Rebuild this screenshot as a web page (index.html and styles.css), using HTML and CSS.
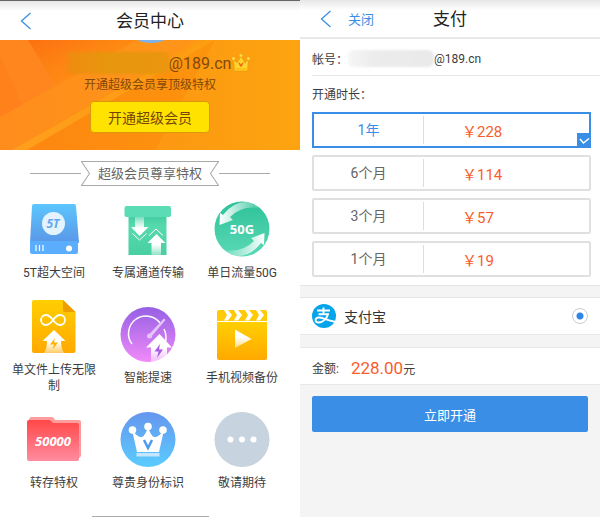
FILE: index.html
```html
<!DOCTYPE html>
<html lang="zh-CN">

<head>
  <meta charset="UTF-8" />
  <meta name="viewport" content="width=device-width,initial-scale=1.0" />
  <title>会员中心</title>
  <link rel="stylesheet" href="styles.css">
</head>

<body>
  <div class="screens">

    <!-- 会员中心 -->
    <section class="screen member">
      <header class="bar bar-member">
        <a href="#" class="back" aria-label="返回">
          <svg width="12" height="18" viewBox="0 0 12 18"><path d="M10.500 1 1.500 9l9 8" fill="none" stroke="#3a8ee6" stroke-width="1.300"/></svg>
        </a>
        <h1>会员中心</h1>
      </header>

      <div class="banner">
        <svg class="banner-bg" viewBox="0 0 300 110" preserveAspectRatio="none">
          <defs>
            <linearGradient id="bg" x1="0" y1="0" x2="1" y2="0">
              <stop offset="0" stop-color="#ff8519"/>
              <stop offset=".5" stop-color="#fd9712"/>
              <stop offset="1" stop-color="#fca40f"/>
            </linearGradient>
            <linearGradient id="bg2" x1="0" y1="0" x2="1" y2="1">
              <stop offset="0" stop-color="#fb7010"/>
              <stop offset="1" stop-color="#ff9112" stop-opacity="0"/>
            </linearGradient>
            <linearGradient id="bg3" x1="0" y1="1" x2="1" y2="0">
              <stop offset="0" stop-color="#ffa01c"/>
              <stop offset="1" stop-color="#ffa712" stop-opacity=".2"/>
            </linearGradient>
          </defs>
          <rect width="300" height="110" fill="url(#bg)"/>
          <path d="M28 0h110L55 46z" fill="url(#bg2)"/>
          <path d="M0 0h28l27 46L0 77z" fill="#ff8522" opacity=".7"/>
          <path d="M0 15l22 50L0 77z" fill="#ff7a18" opacity=".35"/>
          <path d="M0 77 138 0h60L12 110H0z" fill="#ff9320" opacity=".6"/>
          <path d="M12 110 205 0h10L27 110z" fill="url(#bg3)"/>
          <path d="M27 110 215 0l-60 110z" fill="#fb8308" opacity=".35"/>
          <ellipse cx="151" cy="-8" rx="20" ry="11" fill="#7fb2e8"/>
        </svg>
        <div class="account">
          <span class="mask mask-orange"></span>
          <span class="mail">@189.cn</span>
          <svg width="20" height="20" viewBox="0 0 20 20">
            <path d="M2.500 6 6 10l4-7 4 7 3.500-4-1 12h-13z" fill="#ffd52e" stroke="#e99b14" stroke-width=".8"/>
            <path d="M3.500 15h13v2.500h-13z" fill="#ffc21a"/>
            <path d="m8 10 2 3 2-3" fill="none" stroke="#ee6a13" stroke-width="1.500"/>
            <g fill="#ffe14a" stroke="#e99b14" stroke-width=".5"><circle cx="2.500" cy="5.500" r="1.700"/><circle cx="10" cy="2.500" r="1.700"/><circle cx="17.500" cy="5.500" r="1.700"/></g>
          </svg>
        </div>
        <p class="tip">开通超级会员享顶级特权</p>
        <button type="button" class="btn-open">开通超级会员</button>
      </div>

      <div class="ribbon">
        <div class="ribbon-text">
          <svg class="ribbon-bg" viewBox="0 0 138 25" preserveAspectRatio="none"><path d="M.5.5h137l-8 12 8 12H.5l8-12z" fill="#fff" stroke="#a9a9a9"/></svg>
          <h2>超级会员尊享特权</h2>
        </div>
      </div>

      <ul class="rights">
        <li>
          <svg viewBox="0 0 56 56">
            <defs><linearGradient id="disk" x1="0" y1="0" x2="0" y2="1"><stop offset="0" stop-color="#5cc6fd"/><stop offset="1" stop-color="#5a97e8"/></linearGradient></defs>
            <path d="M8 3h40q2 0 2 2l3 37H4L6 5q0-2 2-2z" fill="url(#disk)"/>
            <path d="M4 40h48v11q0 2-2 2H6q-2 0-2-2z" fill="#5aaefd"/>
            <circle cx="27.500" cy="22.500" r="11.500" fill="#e4f3fe"/>
            <text x="27" y="27" class="t-disk">5T</text>
            <path d="M10 44v6M13.500 44v6M17 44v6" stroke="#fff" stroke-width="1.200"/>
            <circle cx="43" cy="47.500" r="3" fill="#fff"/>
          </svg>
          <span>5T超大空间</span>
        </li>
        <li>
          <svg viewBox="0 0 56 56">
            <defs>
              <linearGradient id="down" x1="0" y1="0" x2="0" y2="1"><stop offset="0" stop-color="#fff" stop-opacity=".3"/><stop offset=".6" stop-color="#fff"/></linearGradient>
              <linearGradient id="up" x1="0" y1="1" x2="0" y2="0"><stop offset="0" stop-color="#fff" stop-opacity=".4"/><stop offset=".5" stop-color="#fff"/></linearGradient>
              <linearGradient id="box" x1="0" y1="0" x2="0" y2="1"><stop offset="0" stop-color="#3fcb9d"/><stop offset=".3" stop-color="#57d9ae"/><stop offset="1" stop-color="#48cfa2"/></linearGradient>
            </defs>
            <rect x="8.500" y="13" width="38" height="41" fill="url(#box)"/>
            <rect x="4.500" y="5" width="46.500" height="11" rx="2" fill="#5bdcb5"/>
            <path d="M15 16h9v10h4.500l-9 9-8.500-9h4z" fill="url(#down)"/>
            <path d="m12.500 32.500 7 6.500 7-6.500" fill="none" stroke="#fff" stroke-width="1"/>
            <path d="M31.500 54h9.500V42h4.500l-9-9-9 9h4z" fill="url(#up)"/>
            <path d="m29 34.500 7-6.500 7 6.500" fill="none" stroke="#fff" stroke-width="1"/>
          </svg>
          <span>专属通道传输</span>
        </li>
        <li>
          <svg viewBox="0 0 56 56">
            <defs>
              <linearGradient id="flow" x1="0" y1="0" x2="0" y2="1"><stop offset="0" stop-color="#2fc29a"/><stop offset="1" stop-color="#5ad9b5"/></linearGradient>
              <linearGradient id="tail1" x1="0" y1="0" x2="1" y2="0"><stop offset="0" stop-color="#fff"/><stop offset="1" stop-color="#fff" stop-opacity=".1"/></linearGradient>
              <linearGradient id="tail2" x1="1" y1="0" x2="0" y2="0"><stop offset="0" stop-color="#fff"/><stop offset="1" stop-color="#fff" stop-opacity=".1"/></linearGradient>
            </defs>
            <circle cx="28" cy="28" r="27.500" fill="url(#flow)"/>
            <path d="M5.500 24 6 12l3 2Q19 1 32 1q10 1 13 6-17-3-29 9l3 3z" fill="url(#tail1)"/>
            <path d="M50.500 32 50 44l-3-2Q37 55 24 55q-10-1-13-6 17 3 29-9l-3-3z" fill="url(#tail2)"/>
            <text x="28" y="33" class="t-flow">50G</text>
          </svg>
          <span>单日流量50G</span>
        </li>
        <li>
          <svg viewBox="0 0 56 56">
            <defs>
              <linearGradient id="gold" x1="0" y1="0" x2="0" y2="1"><stop offset="0" stop-color="#ffcf00"/><stop offset="1" stop-color="#ffa900"/></linearGradient>
            </defs>
            <path d="M8 2h29l12.500 12v39q0 2-2 2H8q-2 0-2-2V4q0-2 2-2z" fill="url(#gold)"/>
            <path d="M37 2v10q0 2 2 2h10.500z" fill="#ef9e00"/>
            <path d="M27 22c-3-4-5-5-7-5a5 5 0 0 0 0 10c2 0 4-1 7-5s5-5 7-5a5 5 0 0 1 0 10c-2 0-4-1-7-5z" fill="none" stroke="#fff" stroke-width="1.800"/>
            <path d="M28 32 16.500 43h4.500q0 7-3 12h20q-3-5-3-12h4.500z" fill="url(#up)"/>
            <path d="m29 40-5 6.500h4l-1.500 5 5.500-7h-4z" fill="#ffb300"/>
          </svg>
          <span>单文件上传无限制</span>
        </li>
        <li>
          <svg viewBox="0 0 56 56">
            <defs><linearGradient id="speed" x1="0" y1="0" x2="0" y2="1"><stop offset="0" stop-color="#9560e3"/><stop offset="1" stop-color="#f18afa"/></linearGradient></defs>
            <circle cx="28" cy="28.500" r="27.500" fill="url(#speed)"/>
            <path d="M12 38A17 17 0 0 1 40 17M44 23q3 6 1.500 13" fill="none" stroke="#fff" stroke-width="1.500"/>
            <path d="M28.500 29 44 12.500l1.500 1.500L31 31z" fill="#e3c7f8"/>
            <circle cx="29.500" cy="30" r="2.500" fill="#e3c7f8"/>
            <path d="M39.500 28 26 41.500h5V56h16V41.500h5z" fill="url(#up)"/>
            <path d="m40 38-5.500 7.500h4L37 52l6-8.500h-4z" fill="#a65be4"/>
          </svg>
          <span>智能提速</span>
        </li>
        <li>
          <svg viewBox="0 0 56 56">
            <defs><linearGradient id="play" x1="0" y1="1" x2="0" y2="0"><stop offset="0" stop-color="#fff" stop-opacity=".5"/><stop offset=".6" stop-color="#fff"/></linearGradient></defs>
            <path d="M5 4h46q2 0 2 2v9H3V6q0-2 2-2z" fill="#ffca08"/>
            <path d="M10 4h4l4 5-4 5.500h-4l3-5.500zM20 4h4l4 5-4 5.500h-4l3-5.500zM31 4h4l4 5-4 5.500h-4l3-5.500zM42 4h4l4 5-4 5.500h-4l3-5.500z" fill="#fff"/>
            <path d="M3 16h50v36q0 2-2 2H5q-2 0-2-2z" fill="url(#gold)"/>
            <path d="m21 23.500 16.500 9.500L21 42z" fill="url(#play)"/>
          </svg>
          <span>手机视频备份</span>
        </li>
        <li>
          <svg viewBox="0 0 56 56">
            <defs><linearGradient id="folder" x1="0" y1="0" x2="0" y2="1"><stop offset="0" stop-color="#ff4848"/><stop offset="1" stop-color="#ff8ca0"/></linearGradient></defs>
            <path d="M6 6h20q2 0 3 3h24q2 0 2 2v33q0 3-3 3H6q-3 0-3-3V9q0-3 3-3z" fill="#ff9d9d"/>
            <path d="M3 9h20q2 0 4 3h24q2 0 2 2v34q0 2-2 2H3q-2 0-2-2V11q0-2 2-2z" fill="url(#folder)"/>
            <text x="27" y="35" class="t-folder">50000</text>
          </svg>
          <span>转存特权</span>
        </li>
        <li>
          <svg viewBox="0 0 56 56">
            <defs><linearGradient id="crown" x1="0" y1="0" x2="0" y2="1"><stop offset="0" stop-color="#6596ee"/><stop offset="1" stop-color="#5bccff"/></linearGradient></defs>
            <circle cx="28" cy="28.500" r="27.500" fill="url(#crown)"/>
            <path d="M12 19q6 8 10 7 4-2 6-11 2 9 6 11 4 1 10-7l-5 22H17z" fill="#fff"/>
            <g fill="#fff"><circle cx="12.500" cy="19" r="3.800"/><circle cx="28" cy="15.500" r="3.800"/><circle cx="43" cy="19" r="3.800"/></g>
            <path d="M16.500 42h23v3.500h-23z" fill="#c6e6fd"/>
            <path d="m24 29 4 8 4-8" fill="none" stroke="#4c9bf0" stroke-width="2.500"/>
          </svg>
          <span>尊贵身份标识</span>
        </li>
        <li>
          <svg viewBox="0 0 56 56">
            <circle cx="28" cy="28.500" r="27.500" fill="#c7d3de"/>
            <g fill="#fff"><circle cx="16.500" cy="28.500" r="3"/><circle cx="28" cy="28.500" r="3"/><circle cx="39.500" cy="28.500" r="3"/></g>
          </svg>
          <span>敬请期待</span>
        </li>
      </ul>

      <div class="handle"></div>
    </section>

    <!-- 支付 -->
    <section class="screen pay">
      <header class="bar bar-pay">
        <a href="#" class="back" aria-label="返回">
          <svg width="12" height="18" viewBox="0 0 12 18"><path d="M10.500 1 1.500 9l9 8" fill="none" stroke="#3a8ee6" stroke-width="1.300"/></svg>
        </a>
        <a href="#" class="close">关闭</a>
        <h1>支付</h1>
      </header>

      <form class="pay-form">
        <div class="pay-top">
          <div class="user">
            <span>帐号：</span><span class="mask mask-gray"></span><span>@189.cn</span>
          </div>
          <fieldset class="plans">
            <legend>开通时长：</legend>
            <label class="plan">
              <input type="radio" name="plan" value="228" checked>
              <span class="term">1年</span>
              <span class="price">￥228</span>
              <svg class="tick" viewBox="0 0 14 14"><path d="M0 0h14v14H0z" fill="#3a8ee6"/><path d="m3 6 3.500 4L12 5.500" fill="none" stroke="#fff" stroke-width="1.500"/></svg>
            </label>
            <label class="plan">
              <input type="radio" name="plan" value="114">
              <span class="term">6个月</span>
              <span class="price">￥114</span>
            </label>
            <label class="plan">
              <input type="radio" name="plan" value="57">
              <span class="term">3个月</span>
              <span class="price">￥57</span>
            </label>
            <label class="plan">
              <input type="radio" name="plan" value="19">
              <span class="term">1个月</span>
              <span class="price">￥19</span>
            </label>
          </fieldset>
        </div>

        <label class="channel">
          <svg width="24" height="24" viewBox="0 0 24 24">
            <circle cx="12" cy="12" r="12" fill="#06a4ea"/>
            <path d="M5 6.500h13M11.500 3.500v7M6.500 10.300h9.500c-1 4-5 8.200-9 8.200-4.500 0-4.500-4.500-.5-5 4-.3 7 2.500 16.500 4.200" fill="none" stroke="#fff" stroke-width="1.900"/>
          </svg>
          <span class="channel-name">支付宝</span>
          <input type="radio" name="channel" value="alipay" checked>
        </label>

        <div class="amount">
          <span>金额:</span>
          <span class="total"><b>228.00</b>元</span>
        </div>

        <button type="submit" class="btn-pay">立即开通</button>
      </form>
    </section>

  </div>
</body>

</html>
```

FILE: styles.css
```css
* {
  box-sizing: border-box;
}

body {
  margin: 0;
  font-family: Roboto, "Noto Sans CJK SC", sans-serif;
  font-size: 12px;
  color: #3c3c3c;
  background-color: #fff;
}

h1,
h2,
p,
ul {
  margin: 0;
  padding: 0;
  font-weight: normal;
}

a {
  color: #3a8ee6;
  text-decoration: none;
}

button,
input {
  margin: 0;
  font-family: inherit;
}

.screens {
  display: grid;
  grid-template-columns: 1fr 1fr;
  min-height: 100vh;
}

.screen {
  display: flex;
  flex-direction: column;
}

/* 顶部导航 */
.bar {
  display: grid;
  grid-template-columns: 1fr auto 1fr;
  align-items: center;
  padding: 0 20px;
  background: linear-gradient(#e6e6e6, #fff 10px);
}

.bar h1 {
  grid-column: 2;
  grid-row: 1;
  font-size: 17px;
  line-height: 24px;
  color: #222;
}

.bar-member {
  height: 40px;
  border-top: 1px solid #666;
}

.bar-pay {
  height: 39px;
  border-bottom: 2px solid #e8e8e8;
}

.back {
  grid-column: 1;
  grid-row: 1;
  display: flex;
}

.close {
  grid-column: 1;
  grid-row: 1;
  margin-left: 28px;
  font-size: 13px;
}

/* 会员横幅 */
.banner {
  position: relative;
  display: flex;
  flex-direction: column;
  align-items: center;
  padding: 12px 0 17px;
  overflow: hidden;
  color: #83480a;
}

.banner-bg {
  position: absolute;
  top: 0;
  left: 0;
  width: 100%;
  height: 100%;
}

.account,
.tip,
.btn-open {
  position: relative;
}

.account {
  display: flex;
  align-items: center;
  height: 22px;
  padding-left: 18px;
}

.mail {
  font-size: 16px;
}

.mask {
  filter: blur(1px);
}

.mask-orange {
  width: 102px;
  height: 22px;
  border-radius: 4px;
  background: linear-gradient(90deg, #f08b10, #e8960d 40%, #e8960d 85%, #ec960f);
}

.tip {
  margin-top: 1px;
  line-height: 20px;
}

.btn-open {
  width: 120px;
  height: 32px;
  margin-top: 6px;
  padding: 0;
  border: 1px solid #e0960a;
  border-radius: 4px;
  background-color: #ffe200;
  color: #774406;
  font-size: 14px;
}

/* 特权标题 */
.ribbon {
  display: flex;
  align-items: center;
  margin: 11px 30px 15px;
}

.ribbon::before,
.ribbon::after {
  content: "";
  flex: 1;
  height: 1px;
  background-color: #aaa;
}

.ribbon-text {
  position: relative;
  padding: 0 17px;
}

.ribbon-bg {
  position: absolute;
  top: 0;
  left: 0;
  width: 100%;
  height: 100%;
}

.ribbon h2 {
  position: relative;
  font-size: 13px;
  line-height: 25px;
  color: #666;
}

/* 特权列表 */
.rights {
  display: grid;
  grid-template-columns: repeat(3, 1fr);
  row-gap: 17px;
  padding: 0 11px 0 7px;
  list-style: none;
}

.rights li {
  display: flex;
  flex-direction: column;
  align-items: center;
  justify-content: center;
  gap: 8px;
  line-height: 16px;
  text-align: center;
}

.rights svg {
  width: 56px;
  height: 56px;
}

.rights text {
  font-family: "Noto Sans", sans-serif;
  font-weight: bold;
  text-anchor: middle;
  fill: #fff;
}

.rights .t-disk {
  font-size: 12px;
  font-style: italic;
  fill: #62a8f0;
}

.t-flow {
  font-size: 13px;
}

.t-folder {
  font-size: 13px;
  font-style: italic;
}

.handle {
  width: 117px;
  height: 1px;
  margin: auto auto 0;
  background-color: #aaa;
}

/* 支付 */
.pay,
.pay-form {
  background-color: #f4f4f4;
}

.pay-top {
  padding-left: 12px;
  border-bottom: 1px solid #e4e4e4;
  background-color: #fff;
}

.user {
  display: flex;
  align-items: center;
  height: 37px;
  padding-top: 3px;
  border-bottom: 1px solid #e8e8e8;
}

.mask-gray {
  width: 86px;
  height: 17px;
  border-radius: 6px;
  background: linear-gradient(90deg, #f6f6f6, #ececec 30%, #eaeaea);
}

.plans {
  display: flex;
  flex-direction: column;
  gap: 7px;
  min-width: 0;
  margin: 0;
  padding: 0 9px 8px 0;
  border: 0;
}

.plans legend {
  padding: 2px 0 0;
  line-height: 34px;
}

.plan {
  position: relative;
  display: grid;
  grid-template-columns: 2fr 3fr;
  align-items: center;
  height: 36px;
  border: 2px solid #e0e0e0;
  border-radius: 2px;
  font-size: 14px;
  color: #666;
}

.plan:has(:checked) {
  border-color: #3a8ee6;
  border-radius: 0;
  color: #3a8ee6;
}

.plan input {
  position: absolute;
  right: 0;
  bottom: 0;
  width: 14px;
  height: 14px;
  appearance: none;
}

.term {
  border-right: 1px solid #ddd;
  line-height: 28px;
  text-align: center;
}

.price {
  padding-left: 38px;
  font-size: 15px;
  color: #f95d2b;
}

.tick {
  position: absolute;
  right: -2px;
  bottom: -1px;
  width: 14px;
  height: 14px;
}

.channel {
  display: flex;
  align-items: center;
  height: 38px;
  margin-top: 11px;
  padding: 0 12px;
  border-top: 1px solid #e4e4e4;
  border-bottom: 1px solid #e8e8e8;
  background-color: #fff;
}

.channel-name {
  flex: 1;
  margin-left: 8px;
  font-size: 14px;
  color: #333;
}

.channel input {
  width: 16px;
  height: 16px;
  border: 1px solid #ccc;
  border-radius: 50%;
  background-color: #fff;
  appearance: none;
}

.channel input:checked {
  background-image: radial-gradient(circle, #2f86e6 3px, transparent 4px);
}

.amount {
  display: flex;
  align-items: center;
  gap: 12px;
  height: 38px;
  margin-top: 12px;
  padding: 3px 0 0 12px;
  border-top: 1px solid #e8e8e8;
  border-bottom: 1px solid #e8e8e8;
  background-color: #fff;
}

.amount b {
  font-size: 17px;
  font-weight: normal;
  color: #f95d2b;
}

.btn-pay {
  display: block;
  width: calc(100% - 24px);
  height: 36px;
  margin: 11px 12px;
  border: 0;
  border-radius: 2px;
  background-color: #3a8ee6;
  color: #fff;
  font-size: 13px;
}
```
